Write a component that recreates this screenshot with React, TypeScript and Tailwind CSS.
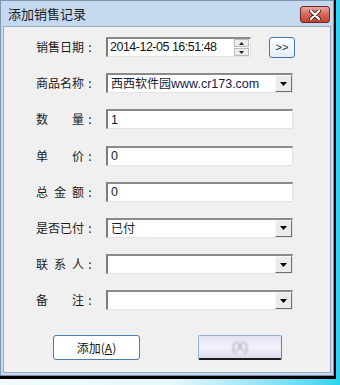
import React from "react";

const cjk = { fontFamily: '"Noto Sans CJK SC", "Liberation Sans", sans-serif' };
const latin = { fontFamily: '"Liberation Sans", "Noto Sans CJK SC", sans-serif' };

function Label({ chars }: { chars: string[] }) {
  return (
    <div className="flex items-center w-[60px] shrink-0 text-[12px] text-[#1b1b1b] leading-none" style={cjk}>
      <div className="flex justify-between w-[48px]">
        {chars.map((c, i) => (
          <span key={i}>{c}</span>
        ))}
      </div>
      <span className="w-[12px] text-center">:</span>
    </div>
  );
}

function Arrow() {
  return (
    <div className="w-[17px] h-full bg-[#ececec] border border-t-[#f8f8f8] border-l-[#f8f8f8] border-b-[#6d6d6d] border-r-[#6d6d6d] flex items-center justify-center">
      <svg width="7" height="4" viewBox="0 0 7 4">
        <path d="M0 0h7L3.5 4z" fill="#000" />
      </svg>
    </div>
  );
}

function Field({ value, combo }: { value?: React.ReactNode; combo?: boolean }) {
  return (
    <div className="w-[187px] h-[20px] bg-white border-t-2 border-l-2 border-t-[#8a8a8a] border-l-[#7c7c7c] border-b border-r border-b-[#e4e4e4] border-r-[#e4e4e4] flex items-center">
      <div className="flex-1 pl-[3px] text-[12.5px] text-[#1a1a2e] leading-none whitespace-nowrap" style={latin}>
        {value}
      </div>
      {combo && <Arrow />}
    </div>
  );
}

function Row({ chars, children }: { chars: string[]; children: React.ReactNode }) {
  return (
    <div className="flex items-center h-[20px]">
      <Label chars={chars} />
      <div className="ml-[10px] flex items-center">{children}</div>
    </div>
  );
}

export default function App() {
  return (
    <div className="relative w-[340px] h-[385px] overflow-hidden bg-gradient-to-r from-[#f2fbfd] via-[#e6f8fc] to-[#22d3f0]">
      <div className="w-[336px] h-[379px] border-r-2 border-b-[3px] border-black">
        <div className="w-full h-full bg-[#c4d8ef] border border-[#7e95b0] flex flex-col px-[2px] pb-[2px]">
          {/* title bar */}
          <div className="h-[25px] flex items-center justify-between shrink-0">
            <span className="pl-[5px] text-[13px] text-[#1c1c1c]" style={cjk}>
              添加销售记录
            </span>
            <div className="mr-[1px] mt-[2px] w-[30px] h-[17px] rounded-[3px] border border-[#6a2a22] bg-gradient-to-b from-[#e9a79a] via-[#d2675a] to-[#c2412e] flex items-center justify-center">
              <svg width="12" height="10" viewBox="0 0 12 10">
                <path d="M2 1l8 8M10 1l-8 8" stroke="#4a2320" strokeWidth="4" strokeLinecap="round" />
                <path d="M2 1l8 8M10 1l-8 8" stroke="#fff" strokeWidth="2.2" strokeLinecap="round" />
              </svg>
            </div>
          </div>

          {/* content */}
          <div className="flex-1 bg-[#f0f0f0] border border-[#9aabbf] pl-[32px] pt-[10px]">
            <div className="flex flex-col gap-[16.2px]">
              <Row chars={["销", "售", "日", "期"]}>
                <div className="w-[145px] h-[20px] bg-white border-t-2 border-l-2 border-t-[#8a8a8a] border-l-[#7c7c7c] border-b border-r border-b-[#e4e4e4] border-r-[#e4e4e4] flex items-center">
                  <div className="flex-1 pl-[2px] text-[12.5px] tracking-[-0.5px] text-[#111] leading-none whitespace-nowrap" style={latin}>
                    2014-12-05 16:51:48
                  </div>
                  <div className="w-[15px] h-[17px] mr-[1px] flex flex-col gap-[1px]">
                    <div className="flex-1 bg-[#ededed] border border-[#bcbcbc] flex items-center justify-center">
                      <svg width="5" height="3" viewBox="0 0 5 3">
                        <path d="M0 3h5L2.5 0z" fill="#222" />
                      </svg>
                    </div>
                    <div className="flex-1 bg-[#ededed] border border-[#bcbcbc] flex items-center justify-center">
                      <svg width="5" height="3" viewBox="0 0 5 3">
                        <path d="M0 0h5L2.5 3z" fill="#222" />
                      </svg>
                    </div>
                  </div>
                </div>
                <button className="ml-[18px] w-[26px] h-[21px] rounded-[3px] border border-[#3d7bb8] bg-gradient-to-b from-[#fbfdff] to-[#e6eef7] text-[11px] text-[#1e2a55] leading-none" style={latin}>
                  &gt;&gt;
                </button>
              </Row>
              <Row chars={["商", "品", "名", "称"]}>
                <Field
                  combo
                  value={
                    <>
                      <span style={cjk} className="text-[12px]">西西软件园</span>
                      <span className="text-[#1a1a50]">www.cr173.com</span>
                    </>
                  }
                />
              </Row>
              <Row chars={["数", "量"]}>
                <Field value="1" />
              </Row>
              <Row chars={["单", "价"]}>
                <Field value="0" />
              </Row>
              <Row chars={["总", "金", "额"]}>
                <Field value="0" />
              </Row>
              <Row chars={["是", "否", "已", "付"]}>
                <Field combo value={<span style={cjk} className="text-[12px]">已付</span>} />
              </Row>
              <Row chars={["联", "系", "人"]}>
                <Field combo />
              </Row>
              <Row chars={["备", "注"]}>
                <Field combo />
              </Row>
            </div>

            <div className="flex mt-[25px] ml-[17px] gap-[58px]">
              <button className="w-[87px] h-[25px] rounded-[3px] border border-[#4a7cb0] bg-white text-[12px] text-[#111] leading-none" style={cjk}>
                添加(<span className="underline">A</span>)
              </button>
              <button className="w-[84px] h-[25px] rounded-[2px] border border-[#9ab0d0] border-b-2 border-b-[#1c1c1c] border-r-[#6a7fa8] bg-gradient-to-b from-[#e2e2f2] via-[#f3f3fb] to-[#dcdcee] flex items-center justify-center">
                <span className="text-[12px] text-[#9a9aa8] blur-[0.8px]" style={latin}>
                  (X)
                </span>
              </button>
            </div>
          </div>
        </div>
      </div>
    </div>
  );
}
